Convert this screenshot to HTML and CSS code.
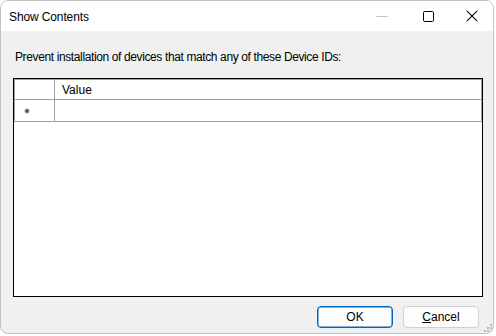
FILE: index.html
```html
<!DOCTYPE html>
<html>
<head>
<meta charset="utf-8">
<link rel="stylesheet" href="styles.css">
</head>
<body>
<div class="window">
  <div class="titlebar">
    <div class="title">Show Contents</div>
    <div class="controls">
      <div class="ctl ctl-min"><svg width="12" height="12" viewBox="0 0 12 12"><line x1="0.5" y1="6.5" x2="11.5" y2="6.5" stroke="#c4c4c4" stroke-width="1"/></svg></div>
      <div class="ctl ctl-max"><svg width="12" height="12" viewBox="0 0 12 12"><rect x="1.5" y="1.5" width="10" height="10" rx="1.2" fill="none" stroke="#000" stroke-width="1"/></svg></div>
      <div class="ctl ctl-close"><svg width="12" height="12" viewBox="0 0 12 12"><path d="M0.8 0.8 L11.2 11.2 M11.2 0.8 L0.8 11.2" stroke="#000" stroke-width="1.1"/></svg></div>
    </div>
  </div>
  <div class="content">
    <div class="label">Prevent installation of devices that match any of these Device IDs:</div>
    <div class="grid">
      <table class="tbl">
        <tr class="hdr"><td class="rh"></td><td class="val">Value</td></tr>
        <tr class="row"><td class="rh"><svg class="star" width="6" height="6" viewBox="0 0 6 6"><path d="M3 0.5 V5.5 M0.8 1.7 L5.2 4.3 M5.2 1.7 L0.8 4.3" stroke="#555" stroke-width="1.3"/></svg></td><td></td></tr>
      </table>
    </div>
    <div class="buttons">
      <button class="btn btn-default">OK</button>
      <button class="btn"><span class="ul">C</span>ancel</button>
    </div>
    <div class="grip"></div>
  </div>
</div>
</body>
</html>
```
FILE: styles.css
```css
html, body {
  margin: 0;
  padding: 0;
  background: #ffffff;
}
body {
  font-family: "Liberation Sans", Arial, sans-serif;
  font-size: 12px;
  color: #000;
}
.window {
  box-sizing: border-box;
  width: 494px;
  height: 334px;
  border: 1px solid #c2c2c2;
  border-radius: 8px;
  overflow: hidden;
  display: flex;
  flex-direction: column;
  background: #f0f0f0;
}
.titlebar {
  height: 30px;
  flex: none;
  background: #ffffff;
  display: flex;
  align-items: center;
  justify-content: space-between;
}
.title {
  padding-left: 8px;
  font-size: 12px;
  line-height: 16px;
  margin-top: 1px;
  letter-spacing: -0.12px;
}
.controls {
  display: flex;
  height: 30px;
}
.ctl {
  display: flex;
  align-items: center;
  justify-content: center;
  height: 30px;
}
.ctl svg { display: block; }
.ctl-min { width: 46px; }
.ctl-max { width: 46px; }
.ctl-close { width: 42px; }
.content {
  position: relative;
  flex: 1;
  display: flex;
  flex-direction: column;
  padding: 0 10px 0 12px;
}
.label {
  margin-top: 18px;
  margin-left: 2px;
  line-height: 16px;
  height: 16px;
  letter-spacing: -0.38px;
}
.grid {
  box-sizing: border-box;
  margin-top: 13px;
  width: 470px;
  height: 219px;
  border: 1px solid #000;
  background: #ffffff;
}
.tbl {
  border-collapse: collapse;
  width: 468px;
}
.tbl td {
  border: 1px solid #a0a0a0;
  padding: 0;
}
.tbl .rh {
  width: 39px;
}
.hdr td {
  height: 19px;
}
.hdr .val {
  padding-left: 7px;
  line-height: 16px;
  vertical-align: middle;
}
.row td {
  height: 21px;
}
.row .rh {
  vertical-align: middle;
}
.star {
  display: block;
  margin-left: 9px;
}
.buttons {
  display: flex;
  justify-content: flex-end;
  gap: 10px;
  margin-top: 9px;
  padding-right: 4px;
}
.btn {
  box-sizing: border-box;
  width: 76px;
  height: 22px;
  background: #fdfdfd;
  border: 1px solid #d0d0d0;
  border-radius: 4px;
  font-family: "Liberation Sans", Arial, sans-serif;
  font-size: 12px;
  color: #000;
  padding: 0;
  line-height: 18px;
}
.btn-default {
  border: 1px solid #0067c0;
  box-shadow: inset 0 0 0 0.5px #0067c0;
}
.ul {
  text-decoration: underline;
}
.grip {
  position: absolute;
  right: 1px;
  bottom: 1px;
  width: 8px;
  height: 8px;
  background:
    radial-gradient(circle at 7px 1px, #b8b8b8 0.9px, transparent 1.1px),
    radial-gradient(circle at 4px 4px, #b8b8b8 0.9px, transparent 1.1px),
    radial-gradient(circle at 7px 4px, #b8b8b8 0.9px, transparent 1.1px),
    radial-gradient(circle at 1px 7px, #b8b8b8 0.9px, transparent 1.1px),
    radial-gradient(circle at 4px 7px, #b8b8b8 0.9px, transparent 1.1px),
    radial-gradient(circle at 7px 7px, #b8b8b8 0.9px, transparent 1.1px);
}
```
